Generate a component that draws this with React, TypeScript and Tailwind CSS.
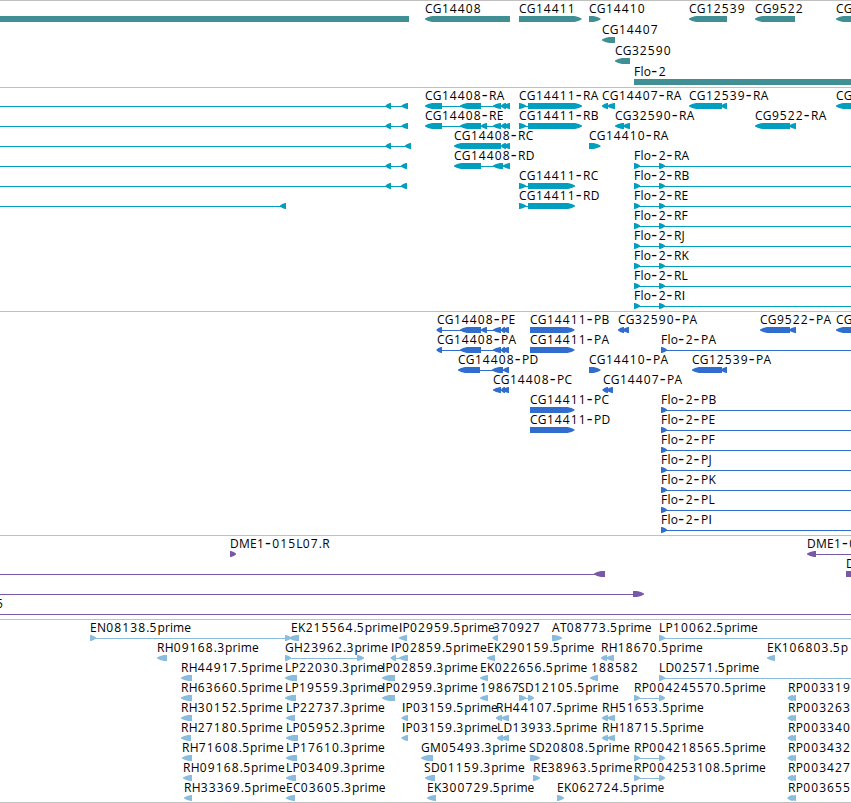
type Block = [start: number, end: number, dir: "l" | "r" | "b"];

interface Feature {
  row: number;
  x: number;
  label?: string;
  blocks?: Block[];
  line?: [number, number];
}

interface TrackProps {
  features: Feature[];
  color: string;
  height: string;
  pitch?: number;
}

const END = 851;

const f = (row: number, x: number, label: string, blocks: Block[] = [], line?: [number, number]): Feature => ({
  row,
  x,
  label,
  blocks,
  line,
});

const genes: Feature[] = [
  { row: 0, x: 0, blocks: [[0, 409, "b"]] },
  f(0, 425, "CG14408", [[425, 510, "l"]]),
  f(0, 519, "CG14411", [[519, 581.5, "r"]]),
  f(0, 589, "CG14410", [[589, 600.5, "r"]]),
  f(0, 689, "CG12539", [[689, 727, "l"]]),
  f(0, 755, "CG9522", [[755, 795, "l"]]),
  f(0, 836, "CG", [[836, 860, "l"]]),
  f(1, 602, "CG14407", [[602, 615, "l"]]),
  f(2, 615, "CG32590", [[615, 630, "l"]]),
  f(3, 634, "Flo-2", [[634, END, "b"]]),
];

const transcripts: Feature[] = [
  { row: 0, x: 0, line: [0, 407], blocks: [[385.5, 391, "l"], [401.5, 408, "l"]] },
  { row: 1, x: 0, line: [0, 407], blocks: [[385.5, 391, "l"], [401.5, 408, "l"]] },
  { row: 2, x: 0, line: [0, 410], blocks: [[385.5, 391, "l"], [405, 411, "l"]] },
  { row: 3, x: 0, line: [0, 406], blocks: [[385.5, 391, "l"], [401, 407, "l"]] },
  { row: 4, x: 0, line: [0, 406], blocks: [[385.5, 391, "l"], [401, 407, "l"]] },
  { row: 5, x: 0, line: [0, 285], blocks: [[280, 286, "l"]] },
  f(0, 425, "CG14408-RA", [[425, 442, "l"], [460, 481, "l"], [493, 501, "l"], [501, 506, "l"], [504, 510, "l"]], [430, 505]),
  f(1, 425, "CG14408-RE", [[425, 442, "l"], [460, 481, "l"], [481, 487, "l"], [493, 501, "l"], [501, 506, "l"], [504, 510, "l"]], [430, 505]),
  f(2, 454, "CG14408-RC", [[454, 501, "l"], [501, 506, "l"], [504, 510, "l"]]),
  f(3, 454, "CG14408-RD", [[454, 481, "l"], [493, 503, "l"], [503, 510, "l"]], [460, 505]),
  f(0, 519, "CG14411-RA", [[519, 526, "r"], [528, 582, "r"]], [519, 530]),
  f(1, 519, "CG14411-RB", [[519, 526, "r"], [528, 582, "r"]], [519, 530]),
  f(4, 519, "CG14411-RC", [[519, 526, "r"], [528, 575, "r"]], [519, 530]),
  f(5, 519, "CG14411-RD", [[519, 526, "r"], [528, 575, "r"]], [519, 530]),
  f(0, 602, "CG14407-RA", [[602, 608, "l"], [607, 615, "l"]]),
  f(0, 689, "CG12539-RA", [[689, 722, "l"], [721, 727, "l"]]),
  f(0, 836, "CG", [[836, 860, "l"]]),
  f(1, 615, "CG32590-RA", [[615, 624, "l"], [623, 630, "l"]]),
  f(1, 755, "CG9522-RA", [[755, 790, "l"], [789, 796, "l"]]),
  f(2, 589, "CG14410-RA", [[589, 600.5, "r"]]),
  ...["RA", "RB", "RE", "RF", "RJ", "RK", "RL", "RI"].map((s, i) =>
    f(3 + i, 634, `Flo-2-${s}`, [[634, 640, "r"], [659, 665, "r"]], [634, END])
  ),
];

const proteins: Feature[] = [
  f(0, 437, "CG14408-PE", [[436.5, 442, "l"], [460, 481, "l"], [481, 487, "l"], [493, 501, "l"], [501, 505, "l"], [503, 509, "l"]], [437, 505]),
  f(1, 437, "CG14408-PA", [[436.5, 442, "l"], [460, 481, "l"], [493, 501, "l"], [501, 505, "l"], [503, 509, "l"]], [437, 505]),
  f(2, 458, "CG14408-PD", [[458, 480, "l"], [492, 503, "l"], [503, 509, "l"]], [462, 505]),
  f(3, 493, "CG14408-PC", [[493, 501, "l"], [501, 505, "l"], [503, 509, "l"]]),
  f(0, 530, "CG14411-PB", [[530, 574.5, "r"]]),
  f(1, 530, "CG14411-PA", [[530, 574.5, "r"]]),
  f(4, 530, "CG14411-PC", [[530, 574.5, "r"]]),
  f(5, 530, "CG14411-PD", [[530, 574.5, "r"]]),
  f(0, 618, "CG32590-PA", [[618, 624, "l"], [622.5, 629, "l"]]),
  f(0, 760, "CG9522-PA", [[760, 790, "l"], [789, 796, "l"]]),
  f(0, 836, "CG", [[836, 860, "l"]]),
  f(2, 589, "CG14410-PA", [[589, 600.5, "r"]]),
  f(2, 692, "CG12539-PA", [[692, 722, "l"], [721, 727, "l"]]),
  f(3, 603, "CG14407-PA", [[602.5, 608, "l"], [606.5, 613, "l"]]),
  f(1, 661, "Flo-2-PA", [[661, 667, "r"]], [661, END]),
  ...["PB", "PE", "PF", "PJ", "PK", "PL", "PI"].map((s, i) =>
    f(4 + i, 661, `Flo-2-${s}`, [[661, 667, "r"]], [661, END])
  ),
];

const bacs: Feature[] = [
  f(0, 230, "DME1-015L07.R", [[230, 236, "r"]]),
  f(0, 807, "DME1-0", [[807, 816, "l"]], [815, END]),
  { row: 1, x: 0, line: [0, 596], blocks: [[594, 605, "l"]] },
  f(1, 846, "D", [[846, END, "b"]]),
  { row: 2, x: 0, line: [0, 634], blocks: [[633, 644, "r"]] },
  f(3, -4, "5", [], [0, END]),
];

const ests: Feature[] = [
  f(0, 90, "EN08138.5prime", [[90, 96, "r"], [285, 291, "r"]], [90, 290]),
  f(0, 291, "EK215564.5prime", [[289, 299, "l"]]),
  f(0, 399, "IP02959.5prime", [[399, 407, "l"]]),
  f(0, 493, "370927", [[492.5, 498, "l"]]),
  f(0, 552, "AT08773.5prime", [[552, 562, "r"]]),
  f(0, 659, "LP10062.5prime", [[659, 665, "r"]], [659, END]),
  f(1, 157, "RH09168.3prime", [[157, 167, "l"]]),
  f(1, 285, "GH23962.3prime", [[285, 291, "r"], [357, 364, "r"]], [285, 358]),
  f(1, 391, "IP02859.5prime", [[390.5, 396, "l"], [399, 408, "l"]], [391, 401]),
  f(1, 487, "EK290159.5prime", [[487, 495, "l"]]),
  f(1, 601, "RH18670.5prime", [[601, 607, "l"], [606, 614, "l"]]),
  f(1, 767, "EK106803.5p", [[767, 775, "l"]]),
  f(2, 181, "RH44917.5prime", [[181, 192, "l"]]),
  f(2, 285, "LP22030.3prime", [[285, 297, "l"]]),
  f(2, 382, "IP02859.3prime", [[382, 395, "l"]]),
  f(2, 480, "EK022656.5prime", [[480, 488, "l"]]),
  f(2, 591, "188582", [[590, 598, "l"]]),
  f(2, 659, "LD02571.5prime", [[659, 665, "r"]], [659, END]),
  f(3, 181, "RH63660.5prime", [[181, 192, "l"]]),
  f(3, 285, "LP19559.3prime", [[285, 296, "l"]]),
  f(3, 382, "IP02959.3prime", [[382, 395, "l"]]),
  f(3, 480, "19867", [[480, 488, "l"]]),
  f(3, 518, "SD12105.5prime", [[519, 526, "r"], [528, 534, "r"]], [520, 530]),
  f(3, 634, "RP004245570.5prime", [[634, 640, "r"], [659, 665, "r"]], [634, 661]),
  f(4, 181, "RH30152.5prime", [[181, 192, "l"]]),
  f(4, 286, "LP22737.3prime", [[286, 295, "l"]]),
  f(4, 402, "IP03159.5prime", [[401.5, 408, "l"]]),
  f(4, 496, "RH44107.5prime", [[496, 502, "l"], [501, 509, "l"]]),
  f(4, 602, "RH51653.5prime", [[602, 608, "l"], [607, 615, "l"]]),
  f(5, 181, "RH27180.5prime", [[181, 191, "l"]]),
  f(5, 286, "LP05952.3prime", [[286, 298, "l"]]),
  f(5, 402, "IP03159.3prime", [[401.5, 408, "l"]]),
  f(5, 497, "LD13933.5prime", [[497, 503, "l"], [501.5, 509, "l"]]),
  f(5, 602, "RH18715.5prime", [[602, 608, "l"], [607, 615, "l"]]),
  f(6, 182, "RH71608.5prime", [[182, 192, "l"]]),
  f(6, 286, "LP17610.3prime", [[286, 297, "l"]]),
  f(6, 421, "GM05493.3prime", [[421, 433, "l"]]),
  f(6, 529, "SD20808.5prime", [[530, 540, "r"]]),
  f(6, 634, "RP004218565.5prime", [[634, 640, "r"], [659, 665, "r"]], [634, 661]),
  f(7, 183, "RH09168.5prime", [[183, 192, "l"]]),
  f(7, 286, "LP03409.3prime", [[286, 296, "l"]]),
  f(7, 424, "SD01159.3prime", [[425, 435, "l"]]),
  f(7, 533, "RE38963.5prime", [[533, 540, "r"]]),
  f(7, 634, "RP004253108.5prime", [[634, 640, "r"], [659, 665, "r"]], [634, 661]),
  f(8, 184, "RH33369.5prime", [[184, 192, "l"]]),
  f(8, 286, "EC03605.3prime", [[286, 295, "l"]]),
  f(8, 427, "EK300729.5prime", [[427, 436, "l"]]),
  f(8, 557, "EK062724.5prime", [[557, 564, "r"]]),
  ...["RP003319", "RP003263", "RP003340", "RP003432", "RP003427", "RP003655"].map((s, i) =>
    f(3 + i, 788, s, [[787.5, 793, "l"], [790.5, 796, "l"]])
  ),
];

function outline([a, b, dir]: Block, y: number) {
  if (dir === "b") return `${a},${y} ${b},${y} ${b},${y + 6} ${a},${y + 6}`;
  const w = b - a;
  const s = dir === "l" ? 1 : -1;
  const tip = dir === "l" ? a : b;
  const back = dir === "l" ? b : a;
  const head = Math.min(7, w - 1);
  const mid = head * 0.45;
  return [
    [tip, y + 2.4],
    [tip + s * mid, y + 1],
    [tip + s * head, y],
    [back, y],
    [back, y + 6],
    [tip + s * head, y + 6],
    [tip + s * mid, y + 5],
    [tip, y + 3.6],
  ]
    .map((p) => p.join(","))
    .join(" ");
}

function partClass(part: string) {
  if (part === "-") return "text-[18px] tracking-[1.5px]";
  if (part === "I") return "font-['Liberation_Sans',sans-serif] tracking-[0.2px]";
  if (part === "prime") return "tracking-[0.1px]";
  return /\d/.test(part) ? "tracking-[1.1px]" : "tracking-[0.3px]";
}

function Label({ x, y, text }: { x: number; y: number; text: string }) {
  const parts = text.split(/(\d+|-|I|prime)/).filter(Boolean);
  return (
    <text x={x} y={y} className="fill-black font-['Open_Sans',sans-serif] text-[12px] whitespace-pre">
      {parts.map((part, i) => {
        // dashes are set larger, so drop them a pixel and come back up after
        const dy = part === "-" ? 1 : parts[i - 1] === "-" ? -1 : 0;
        return (
          <tspan key={i} dy={dy} className={partClass(part)}>
            {part}
          </tspan>
        );
      })}
    </text>
  );
}

function Track({ features, color, height, pitch = 20 }: TrackProps) {
  return (
    <section className={`w-full shrink-0 overflow-hidden border-t border-[#c0c0c0] ${height}`}>
      <svg width="851" height="100%" className={`block ${color}`}>
        {features.map((ft, i) => {
          const top = 15 + ft.row * pitch;
          return (
            <g key={i}>
              {ft.line && <rect x={ft.line[0]} y={top + 3} width={ft.line[1] - ft.line[0]} height={1} />}
              {ft.blocks?.map((b, j) => <polygon key={j} points={outline(b, top)} />)}
            </g>
          );
        })}
        {features.map((ft, i) => ft.label && <Label key={i} x={ft.x} y={12 + ft.row * pitch} text={ft.label} />)}
      </svg>
    </section>
  );
}

export default function App() {
  return (
    <main className="flex h-[803px] w-[851px] flex-col overflow-hidden border-b border-[#c0c0c0] bg-white">
      <Track features={genes} color="fill-[#408f94]" height="h-[87px]" pitch={21} />
      <Track features={transcripts} color="fill-[#009fbf]" height="h-[224px]" />
      <Track features={proteins} color="fill-[#316dcc]" height="h-[224px]" />
      <Track features={bacs} color="fill-[#7859a9]" height="h-[84px]" />
      <Track features={ests} color="fill-[#8abcde]" height="h-[183px]" />
    </main>
  );
}
